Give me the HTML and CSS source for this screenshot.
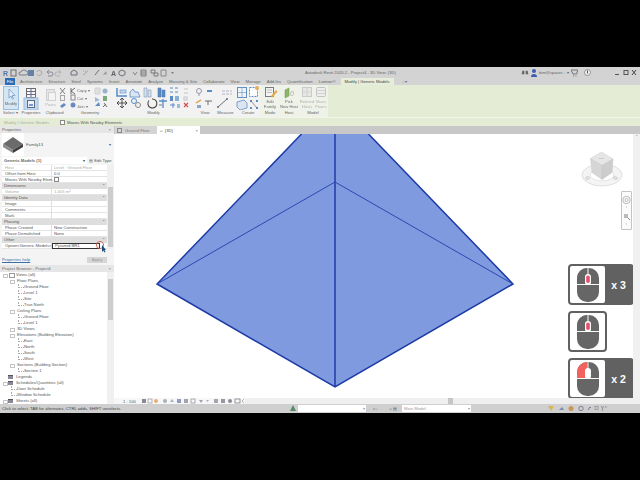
FILE: index.html
```html
<!DOCTYPE html>
<html lang="en">
<head>
  <meta charset="UTF-8">
  <title>Autodesk Revit 2020.2 - Project4 - 3D View: {3D}</title>
  <link rel="stylesheet" href="styles.css">
</head>
<body>
  <svg class="sprites" width="0" height="0">
    <symbol id="mouse" viewBox="0 0 24 36">
      <rect x="1" y="1" width="22" height="34" rx="10" fill="#666"/>
      <path class="mouse-left" d="M11.2 1.2A10 10 0 0 0 1 11v6h10.2z"/>
      <path d="M1 17.5h22M12 1v16.5" stroke="#fff" stroke-width="1"/>
      <rect x="9" y="7" width="6" height="11" rx="3" fill="#fff"/>
      <rect class="mouse-wheel" x="10.2" y="8.5" width="3.6" height="7.5" rx="1.8"/>
    </symbol>
  </svg>

  <div class="app">
    <div class="titlebar">
      <svg class="qat" width="180" height="11" viewBox="0 0 180 11">
        <text class="logo-r" x="3" y="8.5">R</text>
        <rect x="11" y="3" width="5" height="6" fill="none" stroke="#555"/>
        <path d="M20 8h6a2 2 0 0 0 0-4 3 3 0 0 0-5 1 1.5 1.5 0 0 0-1 3z" fill="none" stroke="#667"/>
        <rect x="28" y="3" width="6" height="6" fill="#4a6f9c"/>
        <path d="M37 5a2.5 2.5 0 1 1 0 2" fill="none" stroke="#999"/>
        <path d="M47 5h4a2 2 0 0 1 0 4h-3M47 5l2-2M47 5l2 2" fill="none" stroke="#778"/>
        <path d="M61 5h-4a2 2 0 0 0 0 4h3M61 5l-2-2M61 5l-2 2" fill="none" stroke="#aaa"/>
        <path d="M71 8V5l3-2 3 2v3z" fill="none" stroke="#556"/>
        <path d="M83 8l5-4M85 4h1M83 4h1" stroke="#999"/>
        <path d="M95 8l4-5" stroke="#555"/>
        <path d="M103 8l3-4 1 3z" fill="#889"/>
        <text class="qat-a" x="111" y="8.5">A</text>
        <path d="M122 3l3 1.5v3L122 9l-3-1.5v-3z" fill="none" stroke="#556"/>
        <path d="M133 5l2 3 2-3" fill="none" stroke="#777"/>
        <path d="M141 3h5v6h-5zM141 5h5M141 7h5" fill="none" stroke="#666"/>
        <path d="M151 3h4v3h-4zM154 6h4v3h-4z" fill="none" stroke="#666"/>
        <path d="M161 3h5v6h-5z" fill="none" stroke="#777"/>
        <path d="M171 5h3l-1.500 2z" fill="#666"/>
      </svg>
      <span class="title-text">Autodesk Revit 2020.2 - Project4 - 3D View: {3D}</span>
      <div class="infocenter">
        <svg width="8" height="9" viewBox="0 0 12 9">
          <path d="M2 2h3v5H1zM7 2h3l1 5H7z" fill="#666"/>
        </svg>
        <svg width="6" height="9" viewBox="0 0 6 9">
          <circle cx="3" cy="3" r="2" fill="#3f5fb5"/>
          <path d="M0 9a3 3 0 0 1 6 0z" fill="#3f5fb5"/>
        </svg>
        <span class="user-name">bim@spacer... ▾</span>
        <svg width="7" height="8" viewBox="0 0 7 8">
          <path d="M0 1h7L5.500 5H2zM2 7h1M4.500 7h1" fill="none" stroke="#777"/>
        </svg>
        <svg class="help-icon" width="7" height="7" viewBox="0 0 7 7">
          <circle cx="3.500" cy="3.500" r="3" fill="#eee" stroke="#777" stroke-width=".7"/>
          <path d="M3.500 1.500v3" stroke="#555"/>
        </svg>
        <div class="win-controls">
          <svg width="24" height="7" viewBox="0 0 24 7">
            <path d="M2 5.500h4" stroke="#555"/>
            <rect x="11" y="1.500" width="4" height="4" fill="none" stroke="#555"/>
            <path d="M19 1l4 5M23 1l-4 5" stroke="#444"/>
          </svg>
        </div>
      </div>
    </div>

    <div class="tabs">
      <span class="tab tab-file">File</span>
      <span class="tab">Architecture</span>
      <span class="tab">Structure</span>
      <span class="tab">Steel</span>
      <span class="tab">Systems</span>
      <span class="tab">Insert</span>
      <span class="tab">Annotate</span>
      <span class="tab">Analyze</span>
      <span class="tab">Massing &amp; Site</span>
      <span class="tab">Collaborate</span>
      <span class="tab">View</span>
      <span class="tab">Manage</span>
      <span class="tab">Add-Ins</span>
      <span class="tab">Quantification</span>
      <span class="tab">Lumion®</span>
      <span class="tab tab-active">Modify | Generic Models</span>
      <span class="tab tab-mini">▫ ▾</span>
    </div>

    <div class="ribbon">
      <div class="panel">
        <svg width="21" height="25" viewBox="0 0 21 25">
          <rect x="3.500" y="1.500" width="15" height="23" fill="#cfe3f5" stroke="#8db4de"/>
          <path d="M9 4v9l2-2 1.500 3 1-.5-1.500-3h3z" fill="#e8f1fa" stroke="#4a7fb8" stroke-width=".7"/>
          <text class="ico-text" x="11" y="20" text-anchor="middle">Modify</text>
        </svg>
        <span class="panel-label">Select ▾</span>
      </div>
      <div class="panel">
        <svg width="20" height="25" viewBox="0 0 20 25">
          <rect x="5.500" y="3.500" width="9" height="9" fill="#f7f7f7" stroke="#555"/>
          <path d="M5.500 6.500h9M5.500 9.500h9M10 3.500v9" stroke="#557"/>
          <rect x="3" y="13" width="14" height="12" fill="#bcd5ef" stroke="#8db4de"/>
          <rect x="6.500" y="15.500" width="7" height="7" fill="#eef4fa" stroke="#456"/>
          <path d="M8 20h4" stroke="#36c" stroke-width="1.500"/>
        </svg>
        <span class="panel-label">Properties</span>
      </div>
      <div class="panel">
        <svg width="27" height="25" viewBox="0 0 27 25">
          <rect x="5.500" y="4.500" width="8" height="11" fill="#e5e5e5" stroke="#c8c8c8"/>
          <rect x="7.500" y="7.500" width="7" height="8" fill="#f5f5f5" stroke="#ccc"/>
          <text class="ico-text ico-muted" x="9.500" y="21" text-anchor="middle">Paste</text>
          <path d="M19 3l5 6M24 3l-5 6" stroke="#666"/>
          <rect x="19.500" y="10.500" width="4" height="5" fill="none" stroke="#999"/>
          <path d="M19 21l4-3 2 2-4 3z" fill="#4d7ab8"/>
        </svg>
        <span class="panel-label">Clipboard</span>
      </div>
      <div class="panel">
        <svg width="44" height="25" viewBox="0 0 44 25">
          <path d="M3 3v6M3 6l4-3M3 6l4 3" stroke="#555"/>
          <text class="ico-text" x="9" y="7">Copy ▾</text>
          <rect x="3" y="10" width="4" height="5" fill="none" stroke="#777"/>
          <text class="ico-text" x="9" y="15">Cut ▾</text>
          <circle cx="5" cy="20" r="2.500" fill="#4d7ab8"/>
          <text class="ico-text" x="9" y="23">Join ▾</text>
          <path d="M27 3h5v6h-5z" fill="#ddd" stroke="#ccc"/>
          <circle cx="37" cy="6" r="2.500" fill="#8aa8c8"/>
          <path d="M27 12l5 3-5 2z" fill="#8fb0d8"/>
          <path d="M35 11h4v5h-4z" fill="#6a9a6a"/>
          <path d="M27 21l4-4 1 4z" fill="#3d7bc0"/>
          <path d="M36 18l3 4M35 22l3-3" stroke="#555"/>
        </svg>
        <span class="panel-label">Geometry</span>
      </div>
      <div class="panel">
        <svg width="83" height="25" viewBox="0 0 83 25">
          <path d="M5 3v8h10" fill="none" stroke="#3d7bc0" stroke-width="1.500"/>
          <rect x="8" y="5" width="6" height="3" fill="#bcd5ef" stroke="#3d7bc0" stroke-width=".6"/>
          <path d="M18 12h10l-2-5h-3l-2-3-3 3z" fill="#d8e4f2" stroke="#3d7bc0" stroke-width=".8"/>
          <path d="M32 3h3v9h-3zM36 5h3v7h-3z" fill="#cfdff0" stroke="#6b87a8" stroke-width=".6"/>
          <path d="M46 3h3v9h-3zM50 5h3v7h-3z" fill="#3d7bc0" stroke="#35679f" stroke-width=".6"/>
          <path d="M10 13v10M5 18h10M10 13l-2 2M10 13l2 2M10 23l-2-2M10 23l2-2M5 18l2-2M5 18l2 2M15 18l-2-2M15 18l-2 2" fill="none" stroke="#222" stroke-width=".9"/>
          <circle cx="22" cy="16" r="2.500" fill="none" stroke="#3d7bc0"/>
          <circle cx="26" cy="20" r="2.500" fill="none" stroke="#777"/>
          <path d="M40 14a4.500 4.500 0 1 1-3 1.500" fill="none" stroke="#222" stroke-width="1.100"/>
          <path d="M47 16h8M51 14v9" stroke="#3d7bc0" stroke-width="1.300"/>
          <path d="M47 20h3" stroke="#888" stroke-width="1.300"/>
          <path d="M58 3h3M63 3h3M58 7h3M63 7h3" stroke="#3d7bc0"/>
          <path d="M72 4h4M72 8h4" stroke="#bbb"/>
          <rect x="58" y="11" width="3" height="5" fill="#3d7bc0"/>
          <rect x="63" y="11" width="4" height="5" fill="#7aa5d3"/>
          <rect x="72" y="12" width="3" height="3" fill="none" stroke="#bbb"/>
          <path d="M58 20h5M61 18v5" stroke="#3d7bc0"/>
          <path d="M65 19h3v4h-3z" fill="#8fb0d8"/>
          <path d="M72 18l4 4M76 18l-4 4" stroke="#c33" stroke-width="1.200"/>
        </svg>
        <span class="panel-label">Modify</span>
      </div>
      <div class="panel">
        <svg width="20" height="25" viewBox="0 0 20 25">
          <circle cx="4" cy="6" r="2.500" fill="none" stroke="#889"/>
          <path d="M4 9v2" stroke="#889"/>
          <path d="M12 6h5" stroke="#3d7bc0" stroke-width="2"/>
          <path d="M1 18l5-3" stroke="#d08a20" stroke-width="1.300"/>
          <path d="M10 16h7M13 16v4" stroke="#445" stroke-width=".9"/>
          <rect x="2" y="20" width="4" height="3" fill="#7a9abf"/>
        </svg>
        <span class="panel-label">View</span>
      </div>
      <div class="panel">
        <svg width="21" height="25" viewBox="0 0 21 25">
          <path d="M7 6h10M7 9h10" stroke="#aab" stroke-dasharray="3 1"/>
          <path d="M3 22l9-8" stroke="#556" stroke-width="1"/>
          <circle cx="3" cy="22" r="1" fill="#556"/>
          <circle cx="12" cy="14" r="1" fill="#556"/>
        </svg>
        <span class="panel-label">Measure</span>
      </div>
      <div class="panel">
        <svg width="24" height="25" viewBox="0 0 24 25">
          <rect x="1.500" y="2.500" width="9" height="10" fill="#eef4fa" stroke="#4a7fb8"/>
          <path d="M1.500 7.500h9M6 2.500v10" stroke="#4a7fb8" stroke-width=".6"/>
          <rect x="13.500" y="2.500" width="8" height="9" fill="#fff" stroke="#4a7fb8" stroke-dasharray="2 1"/>
          <circle cx="21" cy="3" r="2" fill="#e0a040"/>
          <path d="M1 17l7-2 3 3v5l-7 2-3-3z" fill="#d8e4f2" stroke="#4a7fb8" stroke-width=".8"/>
          <rect x="14" y="15" width="2" height="2" fill="#3d7bc0"/>
          <rect x="20" y="15" width="2" height="2" fill="#3d7bc0"/>
          <rect x="14" y="22" width="2" height="2" fill="#3d7bc0"/>
          <rect x="20" y="22" width="2" height="2" fill="#3d7bc0"/>
          <path d="M15 16l6 7" stroke="#555" stroke-width=".7"/>
        </svg>
        <span class="panel-label">Create</span>
      </div>
      <div class="panel panel-context">
        <svg width="20" height="25" viewBox="0 0 20 25">
          <rect x="5.500" y="2.500" width="8" height="9" fill="#f4f4f4" stroke="#667"/>
          <path d="M7 5h5M7 7.500h5" stroke="#889" stroke-width=".6"/>
          <path d="M11 11l5-6 1.500 1.500-5 6z" fill="#e0a030"/>
          <text class="ico-text" x="10" y="18" text-anchor="middle">Edit</text>
          <text class="ico-text" x="10" y="23" text-anchor="middle">Family</text>
        </svg>
        <span class="panel-label">Mode</span>
      </div>
      <div class="panel panel-context">
        <svg width="18" height="25" viewBox="0 0 18 25">
          <path d="M5 5l4-2v8l-4 2z" fill="#7cab55" stroke="#5a8a3a" stroke-width=".5"/>
          <text class="ico-host" x="10" y="11">0</text>
          <text class="ico-text" x="9" y="18" text-anchor="middle">Pick</text>
          <text class="ico-text" x="9" y="23" text-anchor="middle">New Host</text>
        </svg>
        <span class="panel-label">Host</span>
      </div>
      <div class="panel panel-context">
        <svg width="30" height="25" viewBox="0 0 30 25">
          <rect x="4.500" y="2.500" width="9" height="9" fill="#e6e6e6" stroke="#c4c4c4"/>
          <path d="M4.500 7h9M9 2.500v9" stroke="#ccc"/>
          <rect x="18.500" y="2.500" width="9" height="9" rx="1" fill="#eee" stroke="#bbb"/>
          <path d="M18.500 5.500h9M18.500 8.500h9" stroke="#ccc"/>
          <text class="ico-text ico-muted" x="9" y="18" text-anchor="middle">Related</text>
          <text class="ico-text ico-muted" x="9" y="23" text-anchor="middle">Hosts</text>
          <text class="ico-text ico-muted" x="23" y="18" text-anchor="middle">Mass</text>
          <text class="ico-text ico-muted" x="23" y="23" text-anchor="middle">Floors</text>
        </svg>
        <span class="panel-label">Model</span>
      </div>
      <div class="ribbon-rest"></div>
    </div>

    <div class="optionsbar">
      <span class="options-name">Modify | Generic Models</span>
      <span class="check"></span>
      <span>Moves With Nearby Elements</span>
    </div>

    <div class="workspace">
      <div class="sidebar">
        <section class="properties">
          <div class="dock-head"><span>Properties</span><span>×</span></div>
          <div class="type-preview">
            <div class="type-thumb">
              <svg width="22" height="22" viewBox="0 0 22 22">
                <path d="M1 11l10-7 10 7-10 6z" fill="#6b6b6b"/>
                <path d="M1 11v3l10 6v-3z" fill="#8a8a8a"/>
                <path d="M21 11v3l-10 6v-3z" fill="#3d3d3d"/>
              </svg>
            </div>
            <span class="type-name">Family13</span>
            <span class="type-caret">▾</span>
          </div>
          <div class="type-row">
            <span class="type-select">Generic Models (1) <i>▾</i></span>
            <span class="edit-type">▤ Edit Type</span>
          </div>
          <div class="prop-wrap">
            <div class="prop-table">
              <div class="prop-row is-muted"><span>Host</span><span>Level : Ground Floor</span></div>
              <div class="prop-row"><span>Offset from Host</span><span>0.0</span></div>
              <div class="prop-row"><span>Moves With Nearby Elem...</span><span><i class="check"></i></span></div>
              <div class="prop-group"><span>Dimensions</span><span>⌃</span></div>
              <div class="prop-row is-muted"><span>Volume</span><span>1.405 m³</span></div>
              <div class="prop-group"><span>Identity Data</span><span>⌃</span></div>
              <div class="prop-row"><span>Image</span><span></span></div>
              <div class="prop-row"><span>Comments</span><span></span></div>
              <div class="prop-row"><span>Mark</span><span></span></div>
              <div class="prop-group"><span>Phasing</span><span>⌃</span></div>
              <div class="prop-row"><span>Phase Created</span><span>New Construction</span></div>
              <div class="prop-row"><span>Phase Demolished</span><span>None</span></div>
              <div class="prop-group"><span>Other</span><span>⌃</span></div>
              <div class="prop-row prop-edit"><span>Option&lt;Generic Models&gt;</span><span class="prop-input">Pyramid BR1</span>
                <svg class="cursor-mark" width="12" height="14" viewBox="0 0 12 14">
                  <circle cx="5" cy="5" r="3.600" fill="none" stroke="#d0604f" stroke-width=".9"/>
                  <path d="M7 5v7l1.500-1.500 1 2 1-.5-1-2H11z" fill="#1b4f7a"/>
                </svg>
              </div>
            </div>
            <div class="vscroll"><span class="thumb thumb-props"></span></div>
          </div>
          <div class="prop-foot">
            <a class="help-link">Properties help</a>
            <span class="apply">Apply</span>
          </div>
        </section>

        <section class="browser">
          <div class="dock-head"><span>Project Browser - Project4</span><span>×</span></div>
          <div class="browser-body">
            <ul class="tree">
              <li class="lv0 has-box has-view">Views (all)</li>
              <li class="lv1 has-box">Floor Plans</li>
              <li class="lv2">Ground Floor</li>
              <li class="lv2">Level 1</li>
              <li class="lv2">Site</li>
              <li class="lv2">True North</li>
              <li class="lv1 has-box">Ceiling Plans</li>
              <li class="lv2">Ground Floor</li>
              <li class="lv2">Level 1</li>
              <li class="lv1 has-box">3D Views</li>
              <li class="lv1 has-box">Elevations (Building Elevation)</li>
              <li class="lv2">East</li>
              <li class="lv2">North</li>
              <li class="lv2">South</li>
              <li class="lv2">West</li>
              <li class="lv1 has-box">Sections (Building Section)</li>
              <li class="lv2">Section 1</li>
              <li class="lv0 has-sheet">Legends</li>
              <li class="lv0 has-box has-sheet">Schedules/Quantities (all)</li>
              <li class="lv1b">Door Schedule</li>
              <li class="lv1b">Window Schedule</li>
              <li class="lv0 has-box has-sheet">Sheets (all)</li>
            </ul>
            <div class="vscroll"><span class="thumb thumb-tree"></span></div>
          </div>
        </section>
      </div>

      <div class="viewarea">
        <div class="viewtabs">
          <span class="viewtab"><i class="plan-icon"></i>Ground Floor</span>
          <span class="viewtab viewtab-active"><span>⌂ &nbsp;{3D}</span><span>×</span></span>
        </div>
        <div class="canvas-row">
          <div class="canvas">
            <svg class="drawing" width="519" height="264" viewBox="114 134 519 264">
              <path d="M301.500 134L157 284l178 103 178-103L368.500 134z" fill="#7f9adf"/>
              <path d="M301.500 134L157 284l178 103 178-103L368.500 134" fill="none" stroke="#1c3aa6" stroke-width="1.500"/>
              <path d="M335 134v253" stroke="#1c3aa6" stroke-width="1.500"/>
              <path d="M157 284l178-102 178 102" fill="none" stroke="#2b49b0" stroke-width="1"/>
            </svg>

            <svg class="viewcube" width="46" height="38" viewBox="580 150 46 38">
              <ellipse cx="602" cy="175" rx="20" ry="11" fill="#f1f1f1" stroke="#d4d4d4"/>
              <ellipse cx="602" cy="175" rx="12" ry="6" fill="#fff" stroke="#dcdcdc"/>
              <path d="M601.500 152l11.500 7-11 6.500-11.500-7z" fill="#dedede" stroke="#bbb" stroke-width=".5"/>
              <path d="M590.500 158.500l11.500 7v14l-10-7z" fill="#c9c9c9" stroke="#bbb" stroke-width=".5"/>
              <path d="M613 159l-11 6.500v14l10-7z" fill="#bdbdbd" stroke="#b0b0b0" stroke-width=".5"/>
              <text class="cube-label" x="599" y="159">TOP</text>
              <path d="M585 178l3-2 2 2-3 2zM618 178l-3-2-2 2 3 2z" fill="#d8d8d8" stroke="#aaa" stroke-width=".5"/>
            </svg>

            <div class="navbar">
              <svg width="9" height="37" viewBox="0 0 9 37">
                <circle cx="4.500" cy="8" r="3.700" fill="none" stroke="#aaa" stroke-width=".8"/>
                <circle cx="4.500" cy="8" r="1.600" fill="none" stroke="#999" stroke-width=".6"/>
                <path d="M4 15h1" stroke="#bbb"/>
                <rect x="2" y="22" width="4" height="4" fill="#bbb"/>
                <path d="M5.500 25.500l2.500 2.500" stroke="#888"/>
                <path d="M4 32h1" stroke="#bbb"/>
              </svg>
            </div>

            <div class="mouse-hints">
              <div class="hint">
                <div class="hint-mouse"><svg class="mouse-mid" width="24" height="36"><use href="#mouse"/></svg></div>
                <span class="hint-count">x 3</span>
              </div>
              <div class="hint">
                <div class="hint-mouse"><svg class="mouse-mid" width="24" height="36"><use href="#mouse"/></svg></div>
              </div>
              <div class="hint">
                <div class="hint-mouse"><svg class="mouse-lft" width="24" height="36"><use href="#mouse"/></svg></div>
                <span class="hint-count">x 2</span>
              </div>
            </div>
          </div>
          <div class="vscroll vscroll-canvas"><i>⌃</i></div>
        </div>
        <div class="viewbar">
          <span class="view-scale">1 : 100</span>
          <svg class="view-icons" width="104" height="6" viewBox="0 0 104 6">
            <rect x="1" y="1" width="4" height="4" fill="#667"/>
            <rect x="7" y="1" width="4" height="4" fill="none" stroke="#778" stroke-width=".7"/>
            <circle cx="15" cy="3" r="2" fill="#e09a50"/>
            <circle cx="24" cy="3" r="2" fill="#8a9aaa"/>
            <path d="M29 4l2-3 2 3z" fill="#99a"/>
            <rect x="36" y="1" width="4" height="4" fill="#6a7fb0"/>
            <rect x="43" y="1" width="4" height="4" fill="#889"/>
            <rect x="50" y="1" width="4" height="4" fill="none" stroke="#667" stroke-width=".7"/>
            <path d="M58 2h4l-2 3z" fill="#7a8aa0"/>
            <path d="M65 2h3l-1.500 2z" fill="#999"/>
            <rect x="73" y="1" width="4" height="4" fill="#8a8a9a"/>
            <rect x="80" y="1" width="4" height="4" fill="#778"/>
            <circle cx="89" cy="3" r="2" fill="#667"/>
            <rect x="94" y="1" width="5" height="4" fill="none" stroke="#556" stroke-width=".8"/>
            <path d="M103 1l-2 2 2 2" fill="none" stroke="#556" stroke-width=".6"/>
          </svg>
          <div class="hscroll"><span class="thumb-h"></span></div>
        </div>
      </div>
    </div>

    <div class="statusbar">
      <span class="status-text">Click to select, TAB for alternates, CTRL adds, SHIFT unselects.</span>
      <svg width="6" height="7" viewBox="0 0 6 7"><path d="M3 0l3 6H0z" fill="#5b8a6a"/></svg>
      <span class="status-field field-work"><i>▾</i></span>
      <span class="status-tools">⌕ ▫</span>
      <span class="status-tools status-home">⌂ ▤</span>
      <span class="status-field field-model">Main Model<i>▾</i></span>
      <svg class="status-icons" width="60" height="7" viewBox="0 0 60 7">
        <path d="M1 1h6L4 6z" fill="#d9b13c"/>
        <path d="M12 5l3-3 2 3z" fill="#5f7fb0"/>
        <circle cx="24" cy="3.500" r="2.500" fill="#c98a3c"/>
        <circle cx="34" cy="3.500" r="2.200" fill="none" stroke="#557" stroke-width=".8"/>
        <path d="M41 5l2-3 1 1" stroke="#667" fill="none"/>
        <rect x="48" y="1.500" width="3" height="3" fill="none" stroke="#778" stroke-width=".7"/>
        <path d="M54 1l1.500 2L57 1M55.500 3v3M58 2h2" stroke="#667" stroke-width=".7" fill="none"/>
      </svg>
    </div>
  </div>
</body>
</html>
```

FILE: styles.css
```css
body {
  margin: 0;
  background: #000;
  overflow: hidden;
  font-family: "Liberation Sans", Arial, sans-serif;
  font-size: 4.2px;
  color: #555;
}

.sprites {
  position: absolute;
}

.app {
  width: 640px;
  height: 346px;
  margin-top: 67px;
  display: flex;
  flex-direction: column;
  background: #f2f2f2;
  overflow: hidden;
}

/* title bar */
.titlebar {
  height: 11px;
  display: flex;
  align-items: center;
  background: #d3d3d3;
}

.qat {
  flex: none;
  opacity: 0.8;
  filter: blur(0.3px);
}

.logo-r {
  font: bold 7px "Liberation Sans", sans-serif;
  fill: #2f5fa8;
}

.qat-a {
  font: bold 7px "Liberation Sans", sans-serif;
  fill: #444;
}

.title-text {
  margin-left: 125px;
  white-space: nowrap;
  color: #666;
}

.infocenter {
  margin-left: auto;
  display: flex;
  align-items: center;
  gap: 2px;
  padding-right: 3px;
}

.user-name {
  width: 30px;
  white-space: nowrap;
  color: #666;
}

.help-icon {
  margin-left: 4px;
}

.win-controls {
  margin-left: 20px;
  display: flex;
}

/* ribbon tabs */
.tabs {
  height: 7px;
  display: flex;
  align-items: center;
  padding-left: 5px;
  background: #d3d3d3;
}

.tab {
  padding: 0 3px;
  line-height: 7px;
  white-space: nowrap;
  color: #666;
}

.tab-file {
  width: 10px;
  padding: 0;
  margin-right: 2px;
  text-align: center;
  background: #2a6cb5;
  color: #fff;
}

.tab-active {
  margin-left: 2px;
  padding: 0 4px;
  background: #e6eedb;
  color: #444;
}

.tab-mini {
  margin-left: 6px;
}

/* ribbon */
.ribbon {
  height: 32px;
  display: flex;
  background: #f2f2f2;
}

.panel {
  display: flex;
  flex-direction: column;
  flex: none;
}

.panel svg {
  display: block;
  opacity: 0.85;
  filter: blur(0.25px);
}

.panel-context {
  background: #eef2e8;
}

.panel-label {
  height: 7px;
  line-height: 6px;
  text-align: center;
  white-space: nowrap;
  color: #666;
}

.ribbon-rest {
  flex: 1;
  background: #e4ecd6;
}

.ico-text {
  font-size: 4.2px;
  fill: #555;
}

.ico-muted {
  fill: #aaa;
}

.ico-host {
  font-size: 7px;
  font-style: italic;
  fill: #9a9a9a;
}

/* options bar */
.optionsbar {
  height: 9px;
  display: flex;
  align-items: center;
  padding-left: 4px;
  background: #e4ecd6;
  border-top: 1px solid #f1f5ea;
  box-sizing: border-box;
  color: #555;
}

.options-name {
  width: 56px;
  color: #a8b09c;
}

.check {
  display: inline-block;
  width: 3px;
  height: 3px;
  margin-right: 2px;
  background: #fff;
  border: 0.5px solid #888;
}

/* left docks */
.workspace {
  height: 278px;
  display: flex;
}

.sidebar {
  width: 114px;
  flex: none;
  display: flex;
  flex-direction: column;
  background: #f4f4f4;
}

.dock-head {
  height: 7px;
  display: flex;
  justify-content: space-between;
  align-items: center;
  padding: 0 3px 0 2px;
  background: #e6e6e6;
  color: #666;
}

.properties {
  height: 139px;
  display: flex;
  flex-direction: column;
}

.type-preview {
  height: 23px;
  display: flex;
  align-items: center;
  padding-left: 2px;
}

.type-thumb {
  width: 22px;
  height: 23px;
  background: #fff;
}

.type-thumb svg {
  display: block;
}

.type-name {
  margin-left: 2px;
}

.type-caret {
  margin-left: auto;
  padding-right: 3px;
}

.type-row {
  height: 9px;
  display: flex;
  align-items: center;
  box-sizing: border-box;
  padding: 1px 1px 1px 2px;
  gap: 2px;
}

.type-select {
  flex: 1;
  display: flex;
  justify-content: space-between;
  padding: 0 2px;
  line-height: 7px;
  background: #fff;
  font-weight: 600;
  color: #666;
}

.type-select i {
  font-style: normal;
}

.edit-type {
  width: 24px;
  white-space: nowrap;
}

.prop-wrap {
  display: flex;
  height: 84px;
}

.prop-table {
  width: 105px;
  margin-left: 2px;
  background: #fff;
}

.prop-row {
  position: relative;
  height: 6px;
  display: grid;
  grid-template-columns: 50px 1fr;
  line-height: 5.5px;
  box-sizing: border-box;
  border-bottom: 0.5px solid #e4e4e4;
  white-space: nowrap;
}

.prop-row span {
  padding-left: 2px;
}

.prop-row span:first-child {
  border-right: 0.5px solid #e0e0e0;
  padding-left: 3px;
}

.prop-row.is-muted {
  color: #aaa;
}

.prop-group {
  height: 6px;
  display: flex;
  justify-content: space-between;
  padding: 0 2px;
  line-height: 6px;
  background: #dedede;
  color: #555;
}

.prop-edit .prop-input {
  width: 48px;
  height: 6px;
  box-sizing: border-box;
  line-height: 4.5px;
  background: #fff;
  border: 0.5px solid #333;
}

.cursor-mark {
  position: absolute;
  left: 93px;
  top: -3px;
}

.vscroll {
  width: 7px;
  flex: none;
  background: #f0f0f0;
  position: relative;
}

.thumb {
  display: block;
  width: 5px;
  margin: 0 auto;
  background: #cdcdcd;
}

.thumb-props {
  height: 60px;
  margin-top: 22px;
}

.thumb-tree {
  height: 41px;
  margin-top: 7px;
}

.prop-foot {
  flex: 1;
  display: flex;
  justify-content: space-between;
  align-items: flex-end;
  padding: 0 7px 2px 2px;
}

.help-link {
  color: #3a6ea8;
  text-decoration: underline;
  line-height: 7px;
}

.apply {
  width: 20px;
  height: 6px;
  line-height: 6px;
  text-align: center;
  background: #d6d6d6;
  color: #999;
}

/* project browser */
.browser {
  flex: 1;
  display: flex;
  flex-direction: column;
}

.browser-body {
  display: flex;
  height: 132px;
  background: #fff;
}

.tree {
  flex: 1;
  margin: 0;
  padding: 0;
  list-style: none;
}

.tree li {
  position: relative;
  height: 6px;
  line-height: 6px;
  white-space: nowrap;
  color: #555;
}

.lv0 {
  padding-left: 16px;
}

.lv1 {
  padding-left: 17px;
}

.lv1b {
  padding-left: 17px;
}

.lv2 {
  padding-left: 24px;
}

/* dotted tree connector */
.lv2::before,
.lv1b::before {
  content: "";
  position: absolute;
  top: 0;
  left: 18px;
  width: 5px;
  height: 3px;
  border-left: 0.5px dotted #aaa;
  border-bottom: 0.5px dotted #aaa;
}

.lv1b::before {
  left: 11px;
}

.has-box::after {
  content: "";
  position: absolute;
  top: 1.500px;
  left: 3px;
  width: 2.500px;
  height: 2.500px;
  border: 0.5px solid #c4c4c4;
  background: #fff;
}

.lv1.has-box::after {
  left: 10px;
}

.has-view::before {
  content: "";
  position: absolute;
  top: 1px;
  left: 9px;
  width: 4px;
  height: 3px;
  border: 0.5px dashed #999;
}

.has-sheet::before {
  content: "";
  position: absolute;
  top: 1px;
  left: 8px;
  width: 5px;
  height: 4px;
  background: #889;
  border-top: 1px solid #555;
  box-sizing: border-box;
}

/* view area */
.viewarea {
  flex: 1;
  min-width: 0;
  display: flex;
  flex-direction: column;
}

.viewtabs {
  height: 8px;
  display: flex;
  background: #c8c8c8;
}

.viewtab {
  display: flex;
  align-items: center;
  width: 42px;
  flex: none;
  padding-left: 2px;
  box-sizing: border-box;
  background: #d4d4d4;
  margin-left: 1px;
  color: #777;
  white-space: nowrap;
}

.plan-icon {
  width: 3px;
  height: 3px;
  margin-right: 3px;
  border: 0.5px solid #888;
}

.viewtab-active {
  width: 43px;
  margin-left: 0;
  padding: 0 2px 0 3px;
  justify-content: space-between;
  background: #fff;
  color: #444;
}

.canvas-row {
  height: 264px;
  display: flex;
}

.canvas {
  position: relative;
  width: 519px;
  flex: none;
  background: #fff;
  overflow: hidden;
}

.drawing {
  display: block;
}

.viewcube {
  position: absolute;
  left: 466px;
  top: 16px;
  opacity: 0.75;
  filter: blur(0.3px);
}

.cube-label {
  font-size: 2.500px;
  fill: #888;
}

.navbar {
  position: absolute;
  left: 507px;
  top: 57px;
  width: 11px;
  height: 39px;
  box-sizing: border-box;
  display: flex;
  justify-content: center;
  background: #fbfbfb;
  border: 1px solid #c4c4c4;
  border-radius: 1px;
}

.mouse-hints {
  position: absolute;
  left: 454px;
  top: 130px;
  display: flex;
  flex-direction: column;
  align-items: flex-start;
  gap: 6px;
}

.hint {
  height: 41px;
  display: flex;
  align-items: center;
  box-sizing: border-box;
  border: 2px solid #616161;
  border-radius: 4px;
  background: #616161;
}

.hint-mouse {
  width: 35px;
  height: 37px;
  display: flex;
  align-items: center;
  justify-content: center;
  background: #fff;
  border-radius: 2px;
}

.hint-count {
  width: 27px;
  text-align: center;
  font: bold 10.500px "Liberation Sans", sans-serif;
  color: #fff;
}

.mouse-left {
  fill: var(--left-btn, #666);
}

.mouse-wheel {
  fill: var(--wheel, #e8506a);
}

.mouse-lft {
  --left-btn: #f2635f;
  --wheel: #fff;
}

.vscroll-canvas {
  flex: 1;
  text-align: center;
  color: #888;
}

.vscroll-canvas i {
  font-style: normal;
}

.viewbar {
  height: 6px;
  display: flex;
  align-items: center;
  background: #f7f7f7;
}

.view-scale {
  width: 27px;
  flex: none;
  padding-left: 9px;
  box-sizing: border-box;
  white-space: nowrap;
}

.view-icons {
  flex: none;
  opacity: 0.75;
  filter: blur(0.25px);
}

.hscroll {
  flex: 1;
  height: 6px;
  display: flex;
  justify-content: center;
  background: #efefef;
}

.thumb-h {
  width: 5px;
  margin-left: 16px;
  background: #c6c6c6;
}

/* status bar */
.statusbar {
  height: 9px;
  display: flex;
  align-items: center;
  padding-left: 2px;
  background: #cfcfcf;
  white-space: nowrap;
}

.status-text {
  width: 288px;
  flex: none;
  color: #444;
}

.status-field {
  display: flex;
  justify-content: space-between;
  align-items: center;
  height: 7px;
  box-sizing: border-box;
  padding: 0 1px 0 2px;
  background: #fff;
  color: #999;
}

.status-field i {
  margin-left: auto;
  font-style: normal;
}

.field-work {
  width: 68px;
  margin-left: 2px;
}

.status-tools {
  width: 18px;
  flex: none;
  text-align: center;
  color: #555;
}

.status-home {
  width: 18px;
}

.field-model {
  width: 69px;
}

.status-icons {
  margin-left: 76px;
  flex: none;
  opacity: 0.8;
}
```
